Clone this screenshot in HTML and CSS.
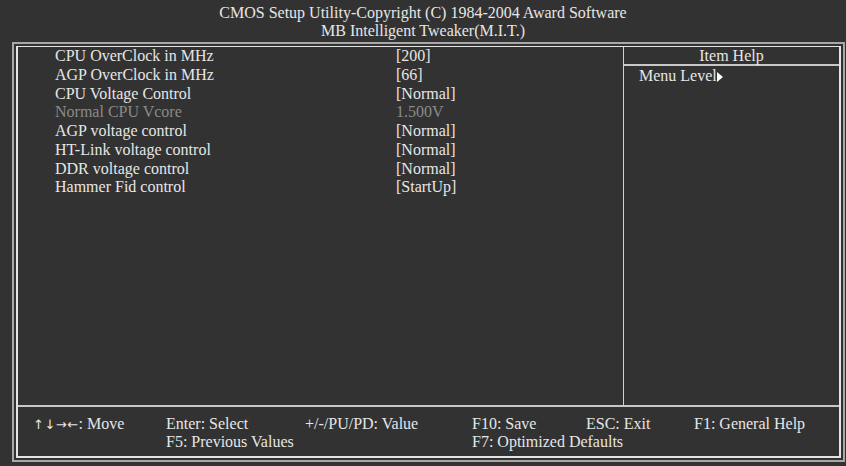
FILE: index.html
```html
<!DOCTYPE html>
<html>
<head>
<meta charset="utf-8">
<link rel="stylesheet" href="styles.css">
</head>
<body>
<div class="header">
  <div class="title">CMOS Setup Utility-Copyright (C) 1984-2004 Award Software</div>
  <div class="title">MB Intelligent Tweaker(M.I.T.)</div>
</div>
<div class="outer">
  <div class="inner">
    <div class="main">
      <div class="list">
        <div class="row"><span class="label">CPU OverClock in MHz</span><span class="value">[200]</span></div>
        <div class="row"><span class="label">AGP OverClock in MHz</span><span class="value">[66]</span></div>
        <div class="row"><span class="label">CPU Voltage Control</span><span class="value">[Normal]</span></div>
        <div class="row dim"><span class="label">Normal CPU Vcore</span><span class="value">1.500V</span></div>
        <div class="row"><span class="label">AGP voltage control</span><span class="value">[Normal]</span></div>
        <div class="row"><span class="label">HT-Link voltage control</span><span class="value">[Normal]</span></div>
        <div class="row"><span class="label">DDR voltage control</span><span class="value">[Normal]</span></div>
        <div class="row"><span class="label">Hammer Fid control</span><span class="value">[StartUp]</span></div>
      </div>
      <div class="help">
        <div class="help-title">Item Help</div>
        <div class="help-body">Menu Level<span class="tri"></span></div>
      </div>
    </div>
    <div class="footer">
      <span><span class="arrows">↑↓→←</span>: Move</span>
      <span>Enter: Select</span>
      <span>+/-/PU/PD: Value</span>
      <span>F10: Save</span>
      <span>ESC: Exit</span>
      <span>F1: General Help</span>
      <span></span>
      <span>F5: Previous Values</span>
      <span></span>
      <span>F7: Optimized Defaults</span>
      <span></span>
      <span></span>
    </div>
  </div>
</div>
</body>
</html>
```
FILE: styles.css
```css
html, body {
  margin: 0;
  padding: 0;
  background: #323232;
}
body {
  width: 846px;
  height: 466px;
  overflow: hidden;
  font-family: "Liberation Serif", "Times New Roman", serif;
  font-size: 16px;
  color: #e6e6e6;
}
.header {
  height: 42px;
  box-sizing: border-box;
  padding-top: 4px;
  text-align: center;
}
.title {
  line-height: 18px;
  height: 18px;
}
.outer {
  margin-left: 12px;
  width: 833px;
  height: 420px;
  box-sizing: border-box;
  border: 2px solid #a8a8a8;
  padding: 2px;
}
.inner {
  height: 100%;
  box-sizing: border-box;
  border: 2px solid #e4e4e4;
  border-top-width: 1px;
  display: flex;
  flex-direction: column;
}
.main {
  height: 358px;
  display: flex;
  border-bottom: 2px solid #c8c8c8;
}
.list {
  width: 605px;
  border-right: 1px solid #d0d0d0;
}
.row {
  display: flex;
  height: 18.75px;
  line-height: 18.75px;
  padding-left: 37px;
}
.label {
  width: 341px;
}
.dim {
  color: #8a8a8a;
}
.help {
  flex: 1;
}
.help-title {
  text-align: center;
  height: 17px;
  line-height: 18px;
  border-bottom: 2px solid #c8c8c8;
}
.help-body {
  padding-left: 15px;
  line-height: 19px;
}
.tri {
  display: inline-block;
  width: 0;
  height: 0;
  border-top: 5px solid transparent;
  border-bottom: 5px solid transparent;
  border-left: 6px solid #ffffff;
  vertical-align: -1px;
}
.footer {
  flex: 1;
  display: grid;
  grid-template-columns: 133px 139px 167px 114px 108px 1fr;
  grid-auto-rows: 18px;
  line-height: 18px;
  padding-top: 8px;
  padding-left: 15px;
  white-space: nowrap;
}
.arrows {
  font-family: "DejaVu Sans", sans-serif;
  font-size: 13px;
  letter-spacing: 0.5px;
}
```
